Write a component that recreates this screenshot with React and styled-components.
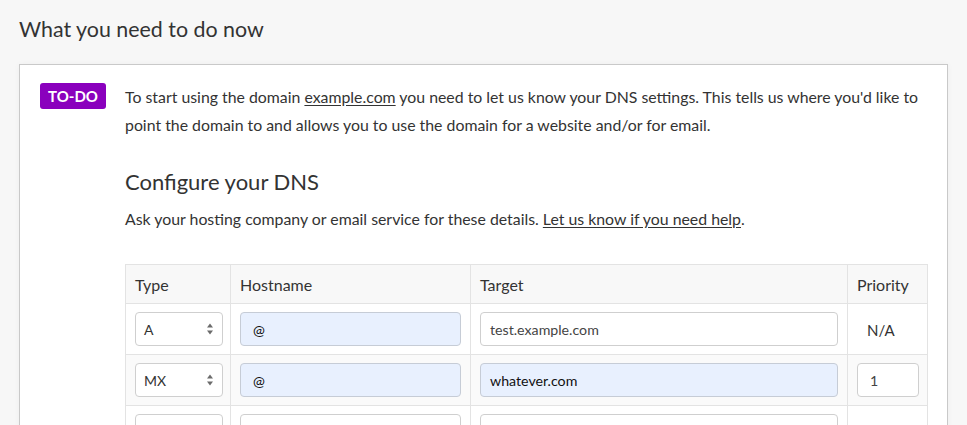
import React from "react";
import styled, { createGlobalStyle } from "styled-components";

const Global = createGlobalStyle`
  html, body { margin: 0; padding: 0; background: #f7f7f7; }
  body { font-family: Lato, "Open Sans", "Liberation Sans", sans-serif; color: #333; }
  * { box-sizing: border-box; }
`;

const Page = styled.div`
  padding: 12px 19px 40px;
`;

const Title = styled.h1`
  margin: 0 0 18px;
  font-size: 21.4px;
  font-weight: 400;
  line-height: 34px;
  color: #333;
`;

const Card = styled.section`
  width: 929px;
  background: #fff;
  border: 1px solid #c9c9c9;
  box-shadow: 0 0 6px rgba(0, 0, 0, 0.04);
  display: flex;
  gap: 19px;
  padding: 18px 20px 24px 20px;
`;

const Badge = styled.span`
  flex: none;
  width: 66px;
  height: 26px;
  border-radius: 3px;
  background: #8a00bd;
  color: #fff;
  font-size: 15px;
  font-weight: 700;
  display: flex;
  align-items: center;
  justify-content: center;
`;

const Content = styled.div`
  flex: 1;
  min-width: 0;
`;

const Para = styled.p`
  margin: 0;
  font-size: 15.85px;
  line-height: 28px;
  color: #333;
`;

const Link = styled.a`
  color: #333;
  text-decoration: underline;
  text-underline-offset: 2px;
`;

const Heading = styled.h2`
  margin: 26px 0 6px;
  font-size: 22px;
  font-weight: 400;
  line-height: 34px;
  color: #333;
`;

const Table = styled.table`
  margin-top: 31px;
  width: 802px;
  table-layout: fixed;
  border-collapse: collapse;
  font-size: 16px;
`;

const Col = styled.col`
  width: ${(p) => p.$w}px;
`;

const Th = styled.th`
  height: 39px;
  padding: 0 9px;
  text-align: left;
  font-weight: 400;
  color: #333;
  background: #f8f8f8;
  border: 1px solid #e3e3e3;
`;

const Tr = styled.tr`
  background: ${(p) => (p.$alt ? "#fafafa" : "#fff")};
`;

const Td = styled.td`
  height: 51px;
  padding: 0 ${(p) => (p.$narrowRight ? 8 : 9)}px 0 ${(p) => p.$pl || 9}px;
  border: 1px solid #e3e3e3;
  color: #333;
`;

const SelectBox = styled.div`
  position: relative;
  width: 88px;
  height: 34px;
  border: 1px solid #cfcfcf;
  border-radius: 4px;
  background: #fff;
  display: flex;
  align-items: center;
  padding-left: 8px;
  font-size: 14px;
  color: #333;
`;

const Arrows = styled.svg`
  position: absolute;
  right: 8px;
  top: 50%;
  transform: translateY(-50%);
`;

const Input = styled.div`
  height: 34px;
  width: ${(p) => (p.$w ? `${p.$w}px` : "100%")};
  border: 1px solid ${(p) => (p.$fill ? "#c6ccd6" : "#cfcfcf")};
  border-radius: 4px;
  background: ${(p) => (p.$fill ? "#e8f0fe" : "#fff")};
  display: flex;
  align-items: center;
  padding-left: ${(p) => p.$pl || 9}px;
  font-size: 14.2px;
  color: ${(p) => (p.$fill ? "#111" : "#444")};
`;

const NA = styled.span`
  font-size: 15px;
  color: #333;
`;

function Select({ value }) {
  return (
    <SelectBox>
      {value}
      <Arrows width="8" height="13" viewBox="0 0 8 13">
        <path d="M4 1 L7 5 L1 5 Z" fill="#6b6b6b" />
        <path d="M4 12 L7 8 L1 8 Z" fill="#6b6b6b" />
      </Arrows>
    </SelectBox>
  );
}

const rows = [
  { type: "A", host: "@", hostFill: true, target: "test.example.com", targetFill: false, priority: null },
  { type: "MX", host: "@", hostFill: true, target: "whatever.com", targetFill: true, priority: "1" },
  { type: "", host: "", hostFill: false, target: "", targetFill: false, priority: null },
];

export default function App() {
  return (
    <>
      <Global />
      <Page>
        <Title>What you need to do now</Title>
        <Card>
          <Badge>TO-DO</Badge>
          <Content>
            <Para>
              To start using the domain <Link href="#">example.com</Link> you need to let us know
              your DNS settings. This tells us where you'd like to point the domain to and allows
              you to use the domain for a website and/or for email.
            </Para>
            <Heading>Configure your DNS</Heading>
            <Para>
              Ask your hosting company or email service for these details.{" "}
              <Link href="#">Let us know if you need help</Link>.
            </Para>
            <Table>
              <colgroup>
                <Col $w={105} />
                <Col $w={240} />
                <Col $w={377} />
                <Col $w={80} />
              </colgroup>
              <thead>
                <tr>
                  <Th>Type</Th>
                  <Th>Hostname</Th>
                  <Th>Target</Th>
                  <Th>Priority</Th>
                </tr>
              </thead>
              <tbody>
                {rows.map((r, i) => (
                  <Tr key={i} $alt={i % 2 === 1}>
                    <Td $narrowRight>
                      <Select value={r.type} />
                    </Td>
                    <Td>
                      <Input $fill={r.hostFill} $pl={12}>{r.host}</Input>
                    </Td>
                    <Td>
                      <Input $fill={r.targetFill}>{r.target}</Input>
                    </Td>
                    <Td $pl={r.priority ? 9 : 19}>
                      {r.priority ? (
                        <Input $w={62} $pl={12}>{r.priority}</Input>
                      ) : (
                        <NA>N/A</NA>
                      )}
                    </Td>
                  </Tr>
                ))}
              </tbody>
            </Table>
          </Content>
        </Card>
      </Page>
    </>
  );
}
